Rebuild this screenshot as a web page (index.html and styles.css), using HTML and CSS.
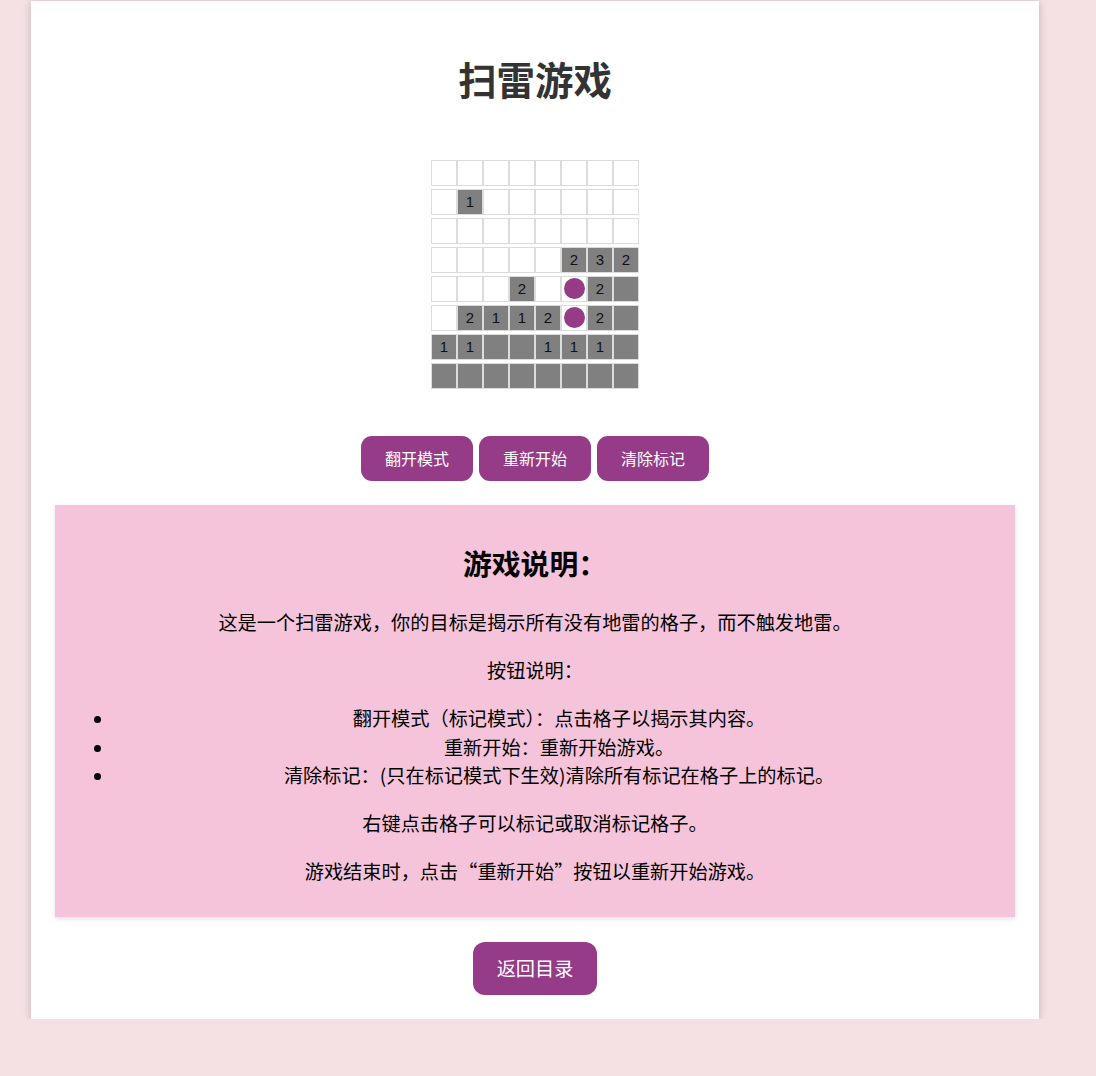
FILE: index.html
```html
<!DOCTYPE html>
<html lang="zh">
<head>
<meta charset="utf-8">
<title>扫雷游戏</title>
<link rel="stylesheet" href="styles.css">
</head>
<body>
<div class="page">
  <h1 class="title">扫雷游戏</h1>
  <div class="board">
    <div class="row"><div class="cell"></div><div class="cell"></div><div class="cell"></div><div class="cell"></div><div class="cell"></div><div class="cell"></div><div class="cell"></div><div class="cell"></div></div>
    <div class="row"><div class="cell"></div><div class="cell open">1</div><div class="cell"></div><div class="cell"></div><div class="cell"></div><div class="cell"></div><div class="cell"></div><div class="cell"></div></div>
    <div class="row"><div class="cell"></div><div class="cell"></div><div class="cell"></div><div class="cell"></div><div class="cell"></div><div class="cell"></div><div class="cell"></div><div class="cell"></div></div>
    <div class="row"><div class="cell"></div><div class="cell"></div><div class="cell"></div><div class="cell"></div><div class="cell"></div><div class="cell open">2</div><div class="cell open">3</div><div class="cell open">2</div></div>
    <div class="row"><div class="cell"></div><div class="cell"></div><div class="cell"></div><div class="cell open">2</div><div class="cell"></div><div class="cell flag"></div><div class="cell open">2</div><div class="cell open"></div></div>
    <div class="row"><div class="cell"></div><div class="cell open">2</div><div class="cell open">1</div><div class="cell open">1</div><div class="cell open">2</div><div class="cell flag"></div><div class="cell open">2</div><div class="cell open"></div></div>
    <div class="row"><div class="cell open">1</div><div class="cell open">1</div><div class="cell open"></div><div class="cell open"></div><div class="cell open">1</div><div class="cell open">1</div><div class="cell open">1</div><div class="cell open"></div></div>
    <div class="row"><div class="cell open"></div><div class="cell open"></div><div class="cell open"></div><div class="cell open"></div><div class="cell open"></div><div class="cell open"></div><div class="cell open"></div><div class="cell open"></div></div>
  </div>
  <div class="controls">
    <button class="btn">翻开模式</button>
    <button class="btn">重新开始</button>
    <button class="btn">清除标记</button>
  </div>
  <div class="info">
    <h2 class="info-title">游戏说明：</h2>
    <p class="info-text">这是一个扫雷游戏，你的目标是揭示所有没有地雷的格子，而不触发地雷。</p>
    <p class="info-text">按钮说明：</p>
    <ul class="info-list">
      <li>翻开模式（标记模式）：点击格子以揭示其内容。</li>
      <li>重新开始：重新开始游戏。</li>
      <li>清除标记：(只在标记模式下生效)清除所有标记在格子上的标记。</li>
    </ul>
    <p class="info-text">右键点击格子可以标记或取消标记格子。</p>
    <p class="info-text">游戏结束时，点击“重新开始”按钮以重新开始游戏。</p>
  </div>
  <div class="back-wrap">
    <button class="btn btn-back">返回目录</button>
  </div>
</div>
</body>
</html>
```

FILE: styles.css
```css
html, body {
  margin: 0;
  padding: 0;
}
body {
  background: #f5e1e4;
  font-family: "Noto Sans CJK SC", "Noto Sans", sans-serif;
  color: #000;
  padding-top: 1px;
}
.page {
  width: 960px;
  margin-left: 31px;
  padding: 23px 24px 24px;
  background: #fff;
  box-shadow: 0 1px 8px rgba(0, 0, 0, 0.22);
  text-align: center;
  line-height: 1.5;
}
.title {
  margin: 26px 0 0;
  font-size: 38.4px;
  line-height: 57.6px;
  font-weight: 700;
  color: #333;
}
.board {
  display: flex;
  flex-direction: column;
  align-items: center;
  gap: 3px;
  margin: 52px 0 47px;
}
.row {
  display: flex;
}
.cell {
  width: 24px;
  height: 23px;
  padding-top: 1px;
  border: 1px solid #dcdcdc;
  background: #fff;
  display: flex;
  align-items: center;
  justify-content: center;
  font-family: "Liberation Sans", Arial, sans-serif;
  font-size: 15px;
  line-height: 16px;
  color: #111;
}
.cell.open {
  background: #808080;
}
.cell.flag::after {
  content: "";
  width: 21px;
  height: 21px;
  border-radius: 50%;
  background: #953b88;
  margin-top: -1px;
}
.controls {
  display: flex;
  justify-content: center;
  gap: 6px;
}
.btn {
  font-family: "Noto Sans CJK SC", "Noto Sans", sans-serif;
  font-size: 16px;
  line-height: 21px;
  padding: 12px 24px;
  border: none;
  border-radius: 11px;
  background: #953b88;
  color: #fff;
  cursor: pointer;
}
.info {
  margin-top: 24px;
  padding: 12px;
  background: #f5c4da;
  box-shadow: 0 2px 5px rgba(0, 0, 0, 0.12);
  font-size: 19.2px;
  line-height: 28.8px;
}
.info-title {
  margin: 24px 0;
  font-size: 28.8px;
  line-height: 43.2px;
  font-weight: 700;
}
.info-text {
  margin: 19.2px 0;
}
.info-list {
  margin: 19.2px 0;
  padding-left: 48px;
}
.back-wrap {
  margin-top: 25px;
  display: flex;
  justify-content: center;
}
.btn-back {
  font-size: 19.2px;
  line-height: 28.8px;
  padding: 12px 24px;
  border-radius: 12px;
}
```
